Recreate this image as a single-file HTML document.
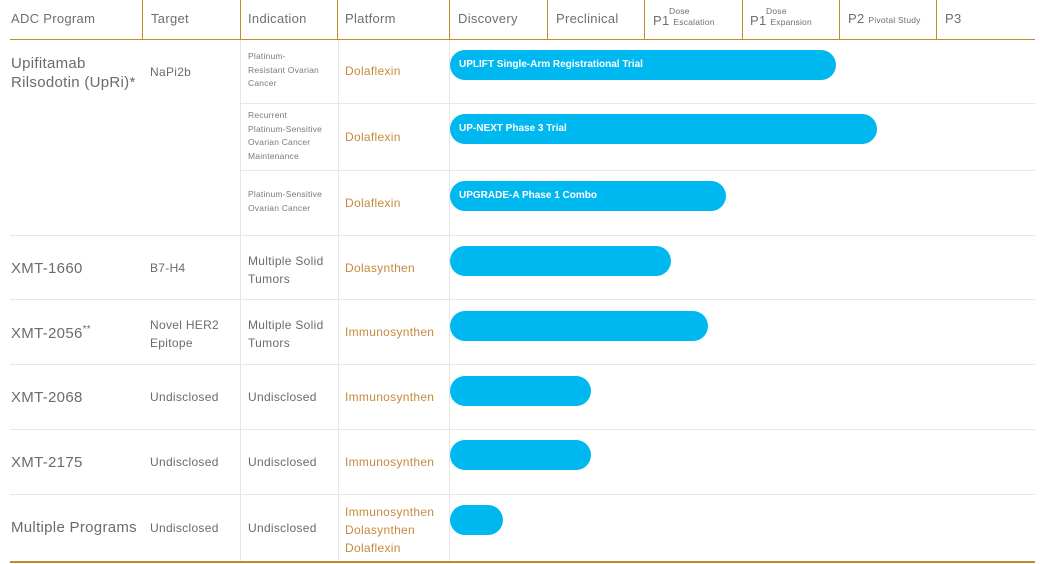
<!DOCTYPE html>
<html><head><meta charset="utf-8"><style>
*{margin:0;padding:0;box-sizing:border-box}
body{width:1040px;height:564px;background:#fff;position:relative;overflow:hidden;font-family:"Liberation Sans",sans-serif;color:#6b6b6b}
.a{position:absolute;white-space:nowrap}
.h{font-size:13px;top:11px;color:#6e6e6e;letter-spacing:0.3px}
.h small{font-size:8.5px;letter-spacing:0.2px}
.vl{position:absolute;width:1px;background:#c08a2e;top:0;height:39px}
.gl{position:absolute;width:1px;background:#e6e6e6}
.hl{position:absolute;height:1px;background:#e8e8e8;right:5px}
.p{font-size:15px;color:#6b6b6b;letter-spacing:0.3px}
.t{font-size:12px;color:#6b6b6b;letter-spacing:0.3px}
.s{font-size:8.5px;line-height:13.5px;color:#7a7a7a;letter-spacing:0.2px}
.pl{font-size:12px;color:#c58a3e;letter-spacing:0.3px}
.bar{position:absolute;left:450px;height:30px;border-radius:15px;background:#00b8f0;color:#fff;font-size:10px;font-weight:600;line-height:30px;padding-left:9px}
</style></head><body>
<div class="a h" style="left:11px">ADC Program</div>
<div class="a h" style="left:151px">Target</div>
<div class="a h" style="left:248px">Indication</div>
<div class="a h" style="left:345px">Platform</div>
<div class="a h" style="left:458px">Discovery</div>
<div class="a h" style="left:556px">Preclinical</div>
<div class="a h" style="left:653px;top:5px;line-height:10px"><small style="margin-left:16px">Dose</small><br>P1 <small>Escalation</small></div>
<div class="a h" style="left:750px;top:5px;line-height:10px"><small style="margin-left:16px">Dose</small><br>P1 <small>Expansion</small></div>
<div class="a h" style="left:848px;top:11px">P2 <small>Pivotal Study</small></div>
<div class="a h" style="left:945px">P3</div>
<div class="vl" style="left:142px"></div><div class="vl" style="left:240px"></div><div class="vl" style="left:337px"></div><div class="vl" style="left:449px"></div><div class="vl" style="left:547px"></div><div class="vl" style="left:644px"></div><div class="vl" style="left:742px"></div><div class="vl" style="left:839px"></div><div class="vl" style="left:936px"></div>
<div style="position:absolute;left:10px;right:5px;top:39px;height:1px;background:#c08a2e"></div>
<div class="gl" style="left:240px;top:40px;height:522px"></div>
<div class="gl" style="left:338px;top:40px;height:522px"></div>
<div class="gl" style="left:449px;top:40px;height:522px"></div>
<div class="hl" style="left:241px;top:103px"></div>
<div class="hl" style="left:241px;top:170px"></div>
<div class="hl" style="left:10px;top:235px"></div>
<div class="hl" style="left:10px;top:299px"></div>
<div class="hl" style="left:10px;top:364px"></div>
<div class="hl" style="left:10px;top:429px"></div>
<div class="hl" style="left:10px;top:494px"></div>
<div style="position:absolute;left:10px;right:5px;top:561px;height:2px;background:#c08a2e"></div>

<div class="a p" style="left:11px;top:54px;line-height:19px">Upifitamab<br>Rilsodotin (UpRi)*</div>
<div class="a t" style="left:150px;top:65px">NaPi2b</div>
<div class="a s" style="left:248px;top:50px">Platinum-<br>Resistant Ovarian<br>Cancer</div>
<div class="a pl" style="left:345px;top:64px">Dolaflexin</div>
<div class="bar" style="top:50px;width:386px">UPLIFT Single-Arm Registrational Trial</div>
<div class="a s" style="left:248px;top:109px">Recurrent<br>Platinum-Sensitive<br>Ovarian Cancer<br>Maintenance</div>
<div class="a pl" style="left:345px;top:130px">Dolaflexin</div>
<div class="bar" style="top:114px;width:427px">UP-NEXT Phase 3 Trial</div>
<div class="a s" style="left:248px;top:188px">Platinum-Sensitive<br>Ovarian Cancer</div>
<div class="a pl" style="left:345px;top:196px">Dolaflexin</div>
<div class="bar" style="top:181px;width:276px">UPGRADE-A Phase 1 Combo</div>

<div class="a p" style="left:11px;top:260px">XMT-1660</div>
<div class="a t" style="left:150px;top:261px">B7-H4</div>
<div class="a t" style="left:248px;top:252px;line-height:18px">Multiple Solid<br>Tumors</div>
<div class="a pl" style="left:345px;top:261px">Dolasynthen</div>
<div class="bar" style="top:246px;width:221px"></div>

<div class="a p" style="left:11px;top:324px">XMT-2056<sup style="font-size:10px;vertical-align:6px">**</sup></div>
<div class="a t" style="left:150px;top:316px;line-height:18px">Novel HER2<br>Epitope</div>
<div class="a t" style="left:248px;top:316px;line-height:18px">Multiple Solid<br>Tumors</div>
<div class="a pl" style="left:345px;top:325px">Immunosynthen</div>
<div class="bar" style="top:311px;width:258px"></div>

<div class="a p" style="left:11px;top:389px">XMT-2068</div>
<div class="a t" style="left:150px;top:390px">Undisclosed</div>
<div class="a t" style="left:248px;top:390px">Undisclosed</div>
<div class="a pl" style="left:345px;top:390px">Immunosynthen</div>
<div class="bar" style="top:376px;width:141px"></div>

<div class="a p" style="left:11px;top:454px">XMT-2175</div>
<div class="a t" style="left:150px;top:455px">Undisclosed</div>
<div class="a t" style="left:248px;top:455px">Undisclosed</div>
<div class="a pl" style="left:345px;top:455px">Immunosynthen</div>
<div class="bar" style="top:440px;width:141px"></div>

<div class="a p" style="left:11px;top:519px">Multiple Programs</div>
<div class="a t" style="left:150px;top:521px">Undisclosed</div>
<div class="a t" style="left:248px;top:521px">Undisclosed</div>
<div class="a pl" style="left:345px;top:503px;line-height:18px">Immunosynthen<br>Dolasynthen<br>Dolaflexin</div>
<div class="bar" style="top:505px;width:53px"></div>
</body></html>
